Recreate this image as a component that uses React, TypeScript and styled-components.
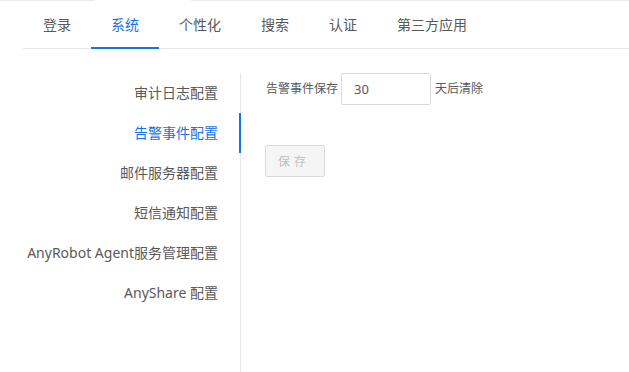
import React from "react";
import styled, { createGlobalStyle, css } from "styled-components";

const Global = createGlobalStyle`
  html, body { margin: 0; padding: 0; background: #fff; }
  body {
    font-family: "Noto Sans", "Noto Sans CJK SC", sans-serif;
    color: #595959;
  }
  * { box-sizing: border-box; }
`;

const BLUE = "#1473e6";
const LINE = "#e8e8e8";

const Page = styled.div`
  height: 100vh;
  display: flex;
  flex-direction: column;
  overflow: hidden;
`;

const TopEdge = styled.div`
  height: 1px;
  flex: none;
  background: linear-gradient(
    to right,
    #e8ecee 0,
    #e8ecee 95px,
    #fff 95px,
    #fff 191px,
    #e8ecee 191px
  );
`;

const TabBar = styled.nav`
  flex: none;
  margin-left: 23px;
  height: 48px;
  display: flex;
  border-bottom: 1px solid ${LINE};
`;

const Tab = styled.div<{ $active?: boolean }>`
  height: 48px;
  margin-bottom: -1px;
  padding: 0 20px;
  display: flex;
  align-items: center;
  font-size: 14px;
  line-height: 20px;
  padding-top: 1px;
  color: ${(p) => (p.$active ? BLUE : "#595959")};
  border-bottom: 2px solid ${(p) => (p.$active ? BLUE : "transparent")};
  cursor: pointer;
`;

const Body = styled.div`
  flex: 1;
  display: flex;
  margin-top: 24px;
  min-height: 0;
`;

const Menu = styled.ul`
  list-style: none;
  margin: 0;
  padding: 0;
  width: 241px;
  flex: none;
  border-right: 1px solid ${LINE};
`;

const MenuItem = styled.li<{ $active?: boolean }>`
  position: relative;
  height: 40px;
  line-height: 40px;
  padding-right: 22px;
  text-align: right;
  font-size: 14px;
  white-space: nowrap;
  color: ${(p) => (p.$active ? BLUE : "#595959")};
  ${(p) =>
    p.$active &&
    css`
      &::after {
        content: "";
        position: absolute;
        right: -1px;
        top: 0;
        width: 2px;
        height: 40px;
        background: ${BLUE};
      }
    `}
`;

const Content = styled.section`
  padding-left: 25px;
  display: flex;
  flex-direction: column;
  align-items: flex-start;
`;

const FieldRow = styled.div`
  display: flex;
  align-items: center;
  font-size: 12px;
  color: #595959;
`;

const Label = styled.span`
  margin-right: 3px;
  line-height: 18px;
`;

const Suffix = styled.span`
  margin-left: 4px;
  line-height: 18px;
`;

const NumberInput = styled.input`
  width: 90px;
  height: 32px;
  padding: 0 12px;
  border: 1px solid #d9d9d9;
  border-radius: 2px;
  font-family: inherit;
  font-size: 13px;
  color: #595959;
  outline: none;
`;

const SaveButton = styled.button`
  margin-top: 40px;
  margin-left: -1px;
  width: 60px;
  height: 32px;
  background: #f5f5f5;
  border: 1px solid #d9d9d9;
  border-radius: 2px;
  color: #bfbfbf;
  font-family: inherit;
  font-size: 12px;
  letter-spacing: 4px;
  padding-left: 4px;
  cursor: not-allowed;
`;

const tabs = ["登录", "系统", "个性化", "搜索", "认证", "第三方应用"];
const menu = [
  "审计日志配置",
  "告警事件配置",
  "邮件服务器配置",
  "短信通知配置",
  "AnyRobot Agent服务管理配置",
  "AnyShare 配置",
];

export default function App() {
  return (
    <Page>
      <Global />
      <TopEdge />
      <TabBar>
        {tabs.map((t) => (
          <Tab key={t} $active={t === "系统"}>
            {t}
          </Tab>
        ))}
      </TabBar>
      <Body>
        <Menu>
          {menu.map((m) => (
            <MenuItem key={m} $active={m === "告警事件配置"}>
              {m}
            </MenuItem>
          ))}
        </Menu>
        <Content>
          <FieldRow>
            <Label>告警事件保存</Label>
            <NumberInput defaultValue="30" />
            <Suffix>天后清除</Suffix>
          </FieldRow>
          <SaveButton disabled>保存</SaveButton>
        </Content>
      </Body>
    </Page>
  );
}
